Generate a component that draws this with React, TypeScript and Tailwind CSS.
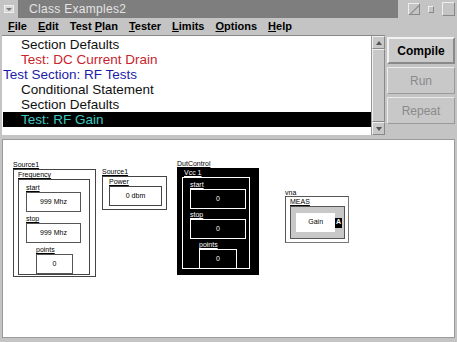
import React from 'react'

const rows = [
  { text: 'Section Defaults', indent: true, color: 'text-[#101010]' },
  { text: 'Test: DC Current Drain', indent: true, color: 'text-[#c8242c]' },
  { text: 'Test Section: RF Tests', indent: false, color: 'text-[#1c1ca8]' },
  { text: 'Conditional Statement', indent: true, color: 'text-[#101010]' },
  { text: 'Section Defaults', indent: true, color: 'text-[#101010]' },
  { text: 'Test: RF Gain', indent: true, color: 'text-[#3cc8c0]', selected: true }
]

const menus = [
  { u: 'F', rest: 'ile' },
  { u: 'E', rest: 'dit' },
  { pre: 'Test ', u: 'P', rest: 'lan' },
  { u: 'T', rest: 'ester' },
  { u: 'L', rest: 'imits' },
  { u: 'O', rest: 'ptions' },
  { u: 'H', rest: 'elp' }
]

function Label({ text, dark }: { text: string; dark?: boolean }) {
  return (
    <div className={`text-[7px] leading-[8px] underline ${dark ? 'text-white' : 'text-black'}`}>{text}</div>
  )
}

function Field({ label, value, dark, w, ml }: { label: string; value: string; dark?: boolean; w: string; ml?: string }) {
  return (
    <div className={`flex flex-col ${ml ?? ''}`}>
      <Label text={label} dark={dark} />
      <div
        className={`${w} h-[20px] flex items-center justify-center text-[7px] border ${
          dark ? 'border-white text-white bg-black' : 'border-[#555] text-black bg-white'
        }`}
      >
        {value}
      </div>
    </div>
  )
}

export default function App() {
  return (
    <div className="w-[457px] h-[342px] bg-[#c4c4c4] overflow-hidden flex flex-col font-['Liberation_Sans',Arial,sans-serif] select-none">
      {/* title bar */}
      <div className="h-[18px] flex items-center">
        <div className="w-[18px] h-full flex items-center justify-center">
          <div className="w-[10px] h-[8px] border border-[#eee] bg-[#d8d8d8] flex items-center justify-center">
            <div className="w-0 h-0 border-l-[3px] border-r-[3px] border-t-[3px] border-l-transparent border-r-transparent border-t-[#777]" />
          </div>
        </div>
        <div className="h-full w-[380px] bg-[#7e7e7e] flex items-center pl-[11px] text-[12px] text-[#e4e4e4] tracking-[0.3px]">
          Class Examples2
        </div>
        <div className="flex-1 flex items-center gap-[6px] pl-[10px]">
          <div className="w-[12px] h-[12px] border border-[#eee] border-r-[#888] border-b-[#888] relative overflow-hidden">
            <div className="absolute w-[14px] h-px bg-[#888] top-[5px] -left-[1px] -rotate-45" />
          </div>
          <div className="w-[6px] h-[7px] border border-[#eee] border-r-[#888] border-b-[#888] mx-[2px]" />
          <div className="w-[13px] h-[14px] border border-[#eee] border-r-[#888] border-b-[#888]" />
        </div>
      </div>

      {/* menu bar */}
      <div className="h-[17px] flex items-center pl-[8px] gap-[11px] text-[11px] font-bold text-black">
        {menus.map((m, i) => (
          <span key={i}>
            {m.pre}
            <span className="underline">{m.u}</span>
            {m.rest}
          </span>
        ))}
      </div>

      {/* list + buttons */}
      <div className="h-[101px] flex">
        <div className="ml-[2px] w-[383px] h-[100px] bg-white border-t border-[#888] flex">
          <div className="flex-1 pt-[1px] pl-[1px]">
            {rows.map((r, i) => (
              <div
                key={i}
                className={`h-[15px] flex items-center text-[13.5px] leading-none ${r.indent ? 'pl-[18px]' : 'pl-[0px]'} ${r.color} ${
                  r.selected ? 'bg-black' : ''
                }`}
              >
                {r.text}
              </div>
            ))}
          </div>
          {/* scrollbar */}
          <div className="w-[14px] h-full bg-[#c8c8c8] border-l border-[#999] flex flex-col">
            <div className="h-[13px] border border-[#f0f0f0] border-r-[#888] border-b-[#888] flex items-center justify-center">
              <div className="w-0 h-0 border-l-[3px] border-r-[3px] border-b-[4px] border-l-transparent border-r-transparent border-b-[#555]" />
            </div>
            <div className="flex-1 border border-[#f0f0f0] border-r-[#888] border-b-[#888]" />
            <div className="h-[13px] border border-[#f0f0f0] border-r-[#888] border-b-[#888] flex items-center justify-center">
              <div className="w-0 h-0 border-l-[3px] border-r-[3px] border-t-[4px] border-l-transparent border-r-transparent border-t-[#555]" />
            </div>
          </div>
        </div>
        <div className="flex-1 flex flex-col gap-[3px] pl-[2px] pr-[2px] pt-[2px]">
          <div className="h-[27px] bg-[#cacaca] border-2 border-[#f2f2f2] border-r-[#8a8a8a] border-b-[#8a8a8a] flex items-center justify-center text-[12px] font-bold text-black">
            Compile
          </div>
          <div className="h-[27px] bg-[#c8c8c8] border border-[#ececec] border-r-[#9a9a9a] border-b-[#9a9a9a] flex items-center justify-center text-[12px] text-[#8a8a8a]">
            Run
          </div>
          <div className="h-[27px] bg-[#c8c8c8] border border-[#ececec] border-r-[#9a9a9a] border-b-[#9a9a9a] flex items-center justify-center text-[12px] text-[#8a8a8a]">
            Repeat
          </div>
        </div>
      </div>

      {/* canvas */}
      <div className="mt-[3px] mx-[2px] h-[199px] bg-white border border-[#9a9a9a] relative">
        {/* Source1 frequency */}
        <div className="absolute left-[10px] top-[21px] flex flex-col">
          <Label text="Source1" />
          <div className="w-[83px] h-[108px] border border-[#444] pt-[1px] pl-[4px]">
            <Label text="Frequency" />
            <div className="w-[72px] h-[96px] border border-[#444] pt-[4px] pl-[7px] flex flex-col gap-[3px]">
              <Field label="start" value="999 Mhz" w="w-[55px]" />
              <Field label="stop" value="999 Mhz" w="w-[55px]" />
              <Field label="points" value="0" w="w-[37px]" ml="ml-[10px]" />
            </div>
          </div>
        </div>

        {/* Source1 power */}
        <div className="absolute left-[99px] top-[28px] flex flex-col">
          <Label text="Source1" />
          <div className="w-[65px] h-[34px] border border-[#444] pt-[1px] pl-[6px]">
            <Label text="Power" />
            <div className="w-[53px] h-[20px] border border-[#444] flex items-center justify-center text-[7px]">0 dbm</div>
          </div>
        </div>

        {/* DutControl */}
        <div className="absolute left-[174px] top-[20px] flex flex-col">
          <Label text="DutControl" />
          <div className="w-[82px] h-[107px] bg-black pt-[1px] pl-[5px]">
            <div className="ml-[2px]">
              <Label text="Vcc 1" dark />
            </div>
            <div className="w-[68px] h-[92px] border border-white pt-[3px] pl-[7px] flex flex-col gap-[2px]">
              <Field label="start" value="0" dark w="w-[56px]" />
              <Field label="stop" value="0" dark w="w-[56px]" />
              <Field label="points" value="0" dark w="w-[38px]" ml="ml-[9px]" />
            </div>
          </div>
        </div>

        {/* vna */}
        <div className="absolute left-[282px] top-[50px] flex flex-col">
          <div className="text-[7px] leading-[6px] text-black">vna</div>
          <div className="w-[64px] h-[47px] border border-[#555] border-r-[#777] border-b-[#777] pt-[1px] px-[4px] bg-white">
            <Label text="MEAS" />
            <div className="w-[55px] h-[33px] bg-[#c8c8c8] border border-[#555] flex items-center pl-[5px] pr-[2px]">
              <div className="w-[41px] h-[19px] bg-white flex items-center justify-center text-[7px] text-black">Gain</div>
              <div className="w-[7px] h-[10px] bg-black text-white text-[7px] font-bold flex items-center justify-center">A</div>
            </div>
          </div>
        </div>
      </div>
    </div>
  )
}
